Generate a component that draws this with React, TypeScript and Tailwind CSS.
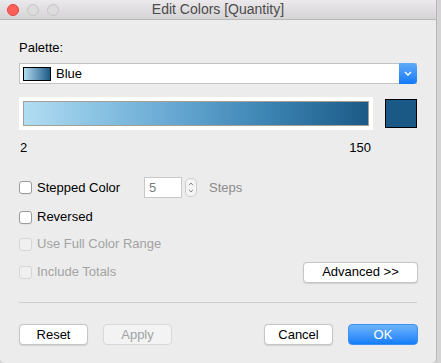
import React from "react";

const font = { fontFamily: '"Liberation Sans", Arial, sans-serif' };

function Checkbox({ disabled }: { disabled?: boolean }) {
  return (
    <div
      className={
        "w-[13px] h-[13px] rounded-[3px] border shrink-0 " +
        (disabled ? "border-[#d6d6d6] bg-[#f0f0f0]" : "border-[#9c9c9c] bg-white shadow-[0_0.5px_0.5px_rgba(0,0,0,0.08)]")
      }
    />
  );
}

function Btn({ children, w, disabled, primary }: { children: React.ReactNode; w: string; disabled?: boolean; primary?: boolean }) {
  if (primary) {
    return (
      <div className={`${w} h-[21px] rounded-[4px] bg-gradient-to-b from-[#6cb3fa] to-[#0f7df9] border border-[#3d8ef5] flex items-center justify-center text-white text-[13px]`}>
        {children}
      </div>
    );
  }
  return (
    <div
      className={
        `${w} h-[21px] rounded-[4px] border flex items-center justify-center text-[13px] ` +
        (disabled
          ? "bg-[#f3f3f3] border-[#d8d8d8] text-[#a2a2a2]"
          : "bg-white border-[#c6c6c6] text-black shadow-[0_0.5px_1px_rgba(0,0,0,0.12)]")
      }
    >
      {children}
    </div>
  );
}

export default function App() {
  return (
    <div className="w-[441px] h-[363px] bg-[#d4d4d4] flex" style={font}>
      <div className="w-[437px] h-[363px] bg-[#ececec] border-r border-[#b8b8b8] rounded-b-[5px] flex flex-col">
        {/* Title bar */}
        <div className="relative h-[20px] shrink-0 bg-gradient-to-b from-[#ebe9eb] to-[#d5d3d5] border-b border-[#b9b9b9] flex items-center">
          <div className="flex items-center gap-[8px] pl-[7px]">
            <div className="w-[12px] h-[12px] rounded-full bg-[#fc5f57] border border-[#e0443e]" />
            <div className="w-[12px] h-[12px] rounded-full bg-[#dcdcdc] border border-[#c6c6c6]" />
            <div className="w-[12px] h-[12px] rounded-full bg-[#dcdcdc] border border-[#c6c6c6]" />
          </div>
          <div className="absolute inset-0 flex items-center justify-center text-[14px] text-[#4b4b4b]">
            Edit Colors [Quantity]
          </div>
        </div>

        <div className="flex flex-col px-[19px] text-[13px] text-black">
          <div className="mt-[20px] h-[16px] leading-[16px]">Palette:</div>

          {/* Dropdown */}
          <div className="mt-[7px] h-[21px] flex bg-white border border-[#c2c2c2]">
            <div className="flex-1 flex items-center">
              <div className="ml-[3px] w-[28px] h-[14px] border border-black bg-gradient-to-r from-[#b2dcf1] to-[#1b5a87]" />
              <span className="ml-[5px]">Blue</span>
            </div>
            <div className="w-[18px] -my-[1px] -mr-[1px] rounded-r-[4px] bg-gradient-to-b from-[#5eaaf9] to-[#0e79f8] flex items-center justify-center">
              <svg width="8" height="5" viewBox="0 0 8 5">
                <path d="M1 1 L4 4 L7 1" stroke="white" strokeWidth="1.4" fill="none" />
              </svg>
            </div>
          </div>

          {/* Gradient row */}
          <div className="mt-[13px] flex items-center">
            <div className="w-[354px] h-[33px] bg-white p-[4px]">
              <div className="w-full h-full border border-[#a59f94] bg-[linear-gradient(to_right,#b2ddf2,#8cc4e4_20%,#64a6d1_45%,#3d85b4_70%,#1b5a87)]" />
            </div>
            <div className="ml-[12px] w-[32px] h-[29px] border border-black bg-[#1a5986]" />
          </div>

          {/* Numbers */}
          <div className="mt-[10px] w-[354px] flex justify-between h-[16px] leading-[16px] pl-[1px] pr-[2px]">
            <span>2</span>
            <span>150</span>
          </div>

          {/* Stepped Color */}
          <div className="mt-[21px] h-[21px] flex items-center">
            <Checkbox />
            <span className="ml-[5px] w-[107px]">Stepped Color</span>
            <div className="w-[38px] h-[21px] bg-white border border-[#c8c8c8] flex items-center pl-[4px] text-[#7a7a7a]">5</div>
            <div className="ml-[3px] w-[12px] h-[19px] rounded-[5px] border border-[#cdcdcd] bg-[#f4f4f4] flex flex-col items-center justify-center gap-[3px]">
              <svg width="6" height="4" viewBox="0 0 6 4"><path d="M1 3.2 L3 1 L5 3.2" stroke="#8a8a8a" strokeWidth="1" fill="none" /></svg>
              <svg width="6" height="4" viewBox="0 0 6 4"><path d="M1 0.8 L3 3 L5 0.8" stroke="#8a8a8a" strokeWidth="1" fill="none" /></svg>
            </div>
            <span className="ml-[12px] text-[#8a8a8a]">Steps</span>
          </div>

          <div className="mt-[9px] h-[20px] flex items-center">
            <Checkbox />
            <span className="ml-[5px]">Reversed</span>
          </div>

          <div className="mt-[7px] h-[20px] flex items-center">
            <Checkbox disabled />
            <span className="ml-[5px] text-[#a3a3a3]">Use Full Color Range</span>
          </div>

          <div className="mt-[8px] h-[20px] flex items-center">
            <Checkbox disabled />
            <span className="ml-[5px] text-[#a3a3a3] flex-1">Include Totals</span>
            <div className="-mr-[1px]">
              <Btn w="w-[115px]">Advanced &gt;&gt;</Btn>
            </div>
          </div>

          <div className="mt-[20px] h-px bg-[#cfcfcf]" />

          <div className="mt-[21px] flex items-center">
            <Btn w="w-[69px]">Reset</Btn>
            <div className="ml-[15px]">
              <Btn w="w-[69px]" disabled>Apply</Btn>
            </div>
            <div className="flex-1" />
            <Btn w="w-[69px]">Cancel</Btn>
            <div className="ml-[15px] -mr-[1px]">
              <Btn w="w-[70px]" primary>OK</Btn>
            </div>
          </div>
        </div>
      </div>
    </div>
  );
}
